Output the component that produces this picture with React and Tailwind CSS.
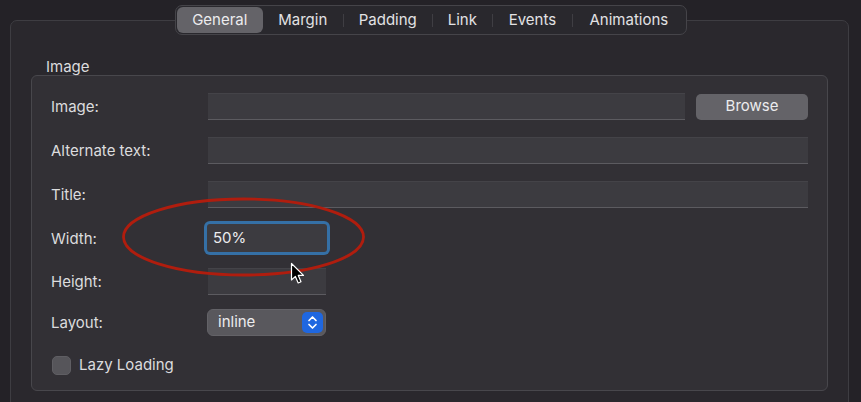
import React from "react";

const tabs = [
  { label: "General", w: 86, active: true },
  { label: "Margin", w: 81 },
  { label: "Padding", w: 89 },
  { label: "Link", w: 61 },
  { label: "Events", w: 80 },
  { label: "Animations", w: 114 },
];

function TextInput({ className = "", children }) {
  return (
    <div
      className={
        "h-[27px] bg-[#3c3b40] border-t border-t-[#444348] border-b border-b-[#5c5b60] flex items-center px-[6px] text-[15px] text-[#e4e4e6] " +
        className
      }
    >
      {children}
    </div>
  );
}

function Label({ children }) {
  return <div className="w-[157px] shrink-0 text-[15px] text-[#dcdcde] pt-[2px]">{children}</div>;
}

export default function App() {
  return (
    <div
      className="relative w-[861px] h-[402px] overflow-hidden bg-[#242227]"
      style={{ fontFamily: "Inter, 'Noto Sans', sans-serif" }}
    >
      <div className="pt-[20px] pl-[10px]">
        <div className="w-[839px] h-[400px] rounded-[7px] border border-[#3e3d42] bg-[#2a282d]">
          {/* tab bar */}
          <div className="-mt-[16px] ml-[164px] w-[512px] h-[30px] rounded-[7px] border border-[#454449] bg-[#29282d] flex items-center p-[1px]">
            {tabs.map((t, i) => (
              <div key={t.label} className="flex items-center h-full" style={{ width: t.w }}>
                {i > 1 && <div className="w-px h-[13px] bg-[#3f3e43]" />}
                <div
                  className={
                    "flex-1 h-full flex items-center justify-center text-[15px] " +
                    (t.active
                      ? "bg-[#646368] rounded-[6px] text-[#ececee]"
                      : "text-[#e2e2e4]")
                  }
                >
                  {t.label}
                </div>
              </div>
            ))}
          </div>

          <div className="pl-[20px] pr-[20px] pt-[23px]">
            <div className="pl-[15px] text-[15px] text-[#dcdcde] leading-[17px]">Image</div>
            <div className="mt-0 h-[316px] rounded-[6px] border border-[#48474c] bg-[#323035] pl-[19px] pr-[19px] pt-[17px]">
              {/* Image */}
              <div className="flex items-center">
                <Label>Image:</Label>
                <TextInput className="w-[477px]" />
                <div className="ml-[11px] w-[112px] h-[26px] rounded-[5px] bg-[#646368] flex items-center justify-center text-[15px] text-[#ececee]">
                  Browse
                </div>
              </div>
              {/* Alternate */}
              <div className="mt-[17px] flex items-center">
                <Label>Alternate text:</Label>
                <TextInput className="flex-1" />
              </div>
              {/* Title */}
              <div className="mt-[17px] flex items-center">
                <Label>Title:</Label>
                <TextInput className="flex-1" />
              </div>
              {/* Width */}
              <div className="mt-[16px] flex items-center">
                <Label>Width:</Label>
                <div className="w-[120px] h-[28px] -ml-[1px] rounded-[3px] bg-[#3c3b40] shadow-[0_0_0_3px_#3570a6] flex items-center pl-[6px] text-[15px] text-[#ececee]">
                  50%
                </div>
              </div>
              {/* Height */}
              <div className="mt-[16px] flex items-center">
                <Label>Height:</Label>
                <TextInput className="w-[118px]" />
              </div>
              {/* Layout */}
              <div className="mt-[14px] flex items-center">
                <Label>Layout:</Label>
                <div className="-ml-[1px] w-[119px] h-[27px] rounded-[6px] bg-[#59585d] border border-[#636267] flex items-center pl-[10px] pr-[2px] text-[15px] text-[#ececee]">
                  <span className="flex-1">inline</span>
                  <div className="w-[21px] h-[21px] rounded-[5px] bg-[#1f67e0] flex items-center justify-center">
                    <svg width="11" height="15" viewBox="0 0 11 15" fill="none">
                      <path d="M2 5.5 L5.5 2 L9 5.5" stroke="white" strokeWidth="1.7" strokeLinecap="round" strokeLinejoin="round" />
                      <path d="M2 9.5 L5.5 13 L9 9.5" stroke="white" strokeWidth="1.7" strokeLinecap="round" strokeLinejoin="round" />
                    </svg>
                  </div>
                </div>
              </div>
              {/* Lazy loading */}
              <div className="mt-[18px] flex items-center">
                <div className="ml-[1px] w-[19px] h-[19px] rounded-[5px] bg-[#56555a] border border-[#5f5e63]" />
                <span className="ml-[8px] text-[15px] text-[#dcdcde]">Lazy Loading</span>
              </div>
            </div>
          </div>
        </div>
      </div>

      {/* red annotation ellipse */}
      <svg className="absolute left-0 top-0 pointer-events-none" width="861" height="402">
        <ellipse cx="243.5" cy="237" rx="120" ry="38" fill="none" stroke="#b01d0e" strokeWidth="2.8" />
      </svg>

      {/* mouse cursor */}
      <svg className="absolute left-[290px] top-[262px]" width="16" height="24" viewBox="0 0 16 24">
        <path
          d="M1.5 1.5 L1.5 18 L5.4 14.4 L8.2 21 L11 19.8 L8.3 13.4 L13.5 13.4 Z"
          fill="#000"
          stroke="#fff"
          strokeWidth="1.2"
          strokeLinejoin="round"
        />
      </svg>
    </div>
  );
}
